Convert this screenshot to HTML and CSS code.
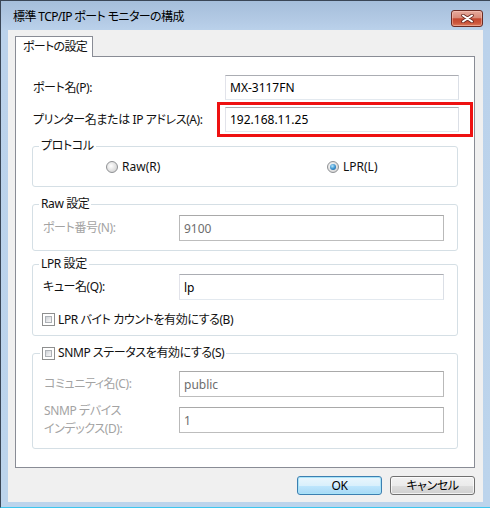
FILE: index.html
```html
<!DOCTYPE html>
<html lang="ja">
<head>
<meta charset="utf-8">
<title>標準 TCP/IP ポート モニターの構成</title>
<link rel="stylesheet" href="styles.css">
</head>
<body>
<div class="window">
  <div class="titlebar">
    <span class="title">標準 TCP/IP ポート モニターの構成</span>
    <div class="close">
      <svg width="13" height="9" viewBox="0 0 13 9">
        <path d="M2 1.5 L11 7.5 M11 1.5 L2 7.5" stroke="#6b2a22" stroke-width="3.6" stroke-linecap="round"/>
        <path d="M2 1.5 L11 7.5 M11 1.5 L2 7.5" stroke="#ffffff" stroke-width="2" stroke-linecap="round"/>
      </svg>
    </div>
  </div>
  <div class="client">
    <div class="tabs"><div class="tab">ポートの設定</div></div>
    <div class="panel">
      <div class="row">
        <span class="lbl">ポート名(P):</span>
        <div class="input top">MX-3117FN</div>
      </div>
      <div class="row row2">
        <span class="lbl">プリンター名または IP アドレス(A):</span>
        <div class="input top">192.168.11.25</div>
        <span class="highlight"></span>
      </div>

      <fieldset class="group proto">
        <legend>プロトコル</legend>
        <div class="radios">
          <span class="opt"><span class="radio"></span>Raw(R)</span>
          <span class="opt"><span class="radio on"></span>LPR(L)</span>
        </div>
      </fieldset>

      <fieldset class="group raw">
        <legend>Raw 設定</legend>
        <div class="frow">
          <span class="lbl dis">ポート番号(N):</span>
          <div class="input dis">9100</div>
        </div>
      </fieldset>

      <fieldset class="group lpr">
        <legend>LPR 設定</legend>
        <div class="frow">
          <span class="lbl">キュー名(Q):</span>
          <div class="input">lp</div>
        </div>
        <div class="checkrow"><span class="cb"></span>LPR バイト カウントを有効にする(B)</div>
      </fieldset>

      <fieldset class="group snmp">
        <legend class="cblegend"><span class="cb"></span>SNMP ステータスを有効にする(S)</legend>
        <div class="frow">
          <span class="lbl dis ind">コミュニティ名(C):</span>
          <div class="input dis">public</div>
        </div>
        <div class="frow second">
          <span class="lbl dis ind two">SNMP デバイス<br>インデックス(D):</span>
          <div class="input dis">1</div>
        </div>
      </fieldset>
    </div>
    <div class="buttons">
      <button class="btn default">OK</button>
      <button class="btn">キャンセル</button>
    </div>
  </div>
</div>
</body>
</html>
```

FILE: styles.css
```css
html, body {
  margin: 0;
  padding: 0;
  background: #ffffff;
}

body {
  font-family: "Noto Sans", "Noto Sans CJK JP", sans-serif;
  font-size: 12px;
  font-feature-settings: "palt";
  color: #111;
}

.window {
  width: 490px;
  height: 508px;
  box-sizing: border-box;
  border-top: 1px solid #3a4656;
  border-left: 1px solid #3a4656;
  border-bottom: 1px solid #3fc6ee;
  background: linear-gradient(#a5bedb 0px, #b2c9e4 18px, #bbd2eb 30px, #bcd4ec 100%);
  display: flex;
  flex-direction: column;
  overflow: hidden;
}

.titlebar {
  height: 29px;
  flex: none;
  display: flex;
  align-items: flex-start;
  justify-content: space-between;
  padding: 0 7px 0 12px;
}

.title {
  margin-top: 8px;
  line-height: 16px;
  font-size: 12px;
  letter-spacing: -0.6px;
  color: #000;
  white-space: nowrap;
}

.close {
  margin-top: 9px;
  width: 32px;
  height: 17px;
  box-sizing: border-box;
  border: 1px solid #6a2b24;
  border-radius: 3px;
  background: linear-gradient(#e7aa9d 0%, #d98b79 45%, #c4472f 52%, #cc563c 80%, #dc7d5f 100%);
  box-shadow: inset 0 0 0 1px rgba(255, 210, 200, 0.45);
  display: flex;
  align-items: center;
  justify-content: center;
}

.close svg {
  display: block;
}

.client {
  flex: none;
  height: 472px;
  margin: 0 7px 0 7px;
  background: #f0f0f0;
  box-sizing: border-box;
  padding: 6px 8px 0 7px;
  display: flex;
  flex-direction: column;
}

.tabs {
  display: flex;
  height: 20px;
  flex: none;
}

.tab {
  position: relative;
  z-index: 1;
  width: 78px;
  height: 21px;
  box-sizing: border-box;
  border: 1px solid #898c95;
  border-bottom: none;
  background: #fff;
  padding: 0 0 0 7px;
  line-height: 19px;
  letter-spacing: -0.7px;
  white-space: nowrap;
}

.panel {
  height: 412px;
  box-sizing: border-box;
  border: 1px solid #898c95;
  background: #fff;
  padding: 18px 16px 0 16px;
  display: flex;
  flex-direction: column;
}

.row {
  display: grid;
  grid-template-columns: 193px 1fr;
  align-items: center;
  height: 25px;
  margin-right: -1px;
}

.row2 {
  position: relative;
  margin-top: 7px;
}

.lbl {
  padding-left: 1px;
  white-space: nowrap;
  line-height: 16px;
  letter-spacing: -0.4px;
}

.lbl.dis {
  color: #a3a3a3;
}

.lbl.ind {
  padding-left: 2px;
}

.lbl.two {
  line-height: 18px;
  margin: -5px 0;
}

.input {
  box-sizing: border-box;
  height: 26px;
  border: 1px solid;
  border-color: #abadb3 #dbdfe6 #e3e9ef #e2e3ea;
  background: #fff;
  padding: 0 4px;
  display: flex;
  align-items: center;
  color: #000;
  white-space: nowrap;
}

.input.top {
  height: 25px;
}

.input.dis {
  border-color: #a9a9a9 #b9b9b9 #bdbdbd #b9b9b9;
  color: #6d6d6d;
}

.highlight {
  position: absolute;
  left: 185px;
  top: -5px;
  width: 256px;
  height: 35px;
  box-sizing: border-box;
  border: 3px solid #ee1111;
}

.group {
  margin: 0;
  padding: 0 13px 0 9px;
  border: 1px solid #d5dfe5;
  border-radius: 3px;
  min-width: 0;
}

.group legend {
  line-height: 14px;
  height: 14px;
  padding: 0 2px;
  margin-left: -3px;
  white-space: nowrap;
  letter-spacing: -0.4px;
}

.proto {
  margin-top: 7px;
  padding-top: 6px;
  padding-bottom: 11px;
}

.radios {
  display: grid;
  grid-template-columns: 221px auto;
  padding-left: 64px;
  height: 16px;
  align-items: center;
}

.opt {
  display: flex;
  align-items: center;
  gap: 4px;
  line-height: 16px;
}

.radio {
  width: 12px;
  height: 12px;
  box-sizing: border-box;
  border-radius: 50%;
  border: 1px solid #8f9194;
  background: radial-gradient(circle at 40% 40%, #ffffff 0%, #e6e6e6 45%, #c9c9c9 100%);
  position: relative;
  flex: none;
}

.radio.on::after {
  content: "";
  position: absolute;
  left: 2px;
  top: 2px;
  width: 6px;
  height: 6px;
  border-radius: 50%;
  background: radial-gradient(circle at 40% 35%, #b9e6fb 0%, #3d95d0 50%, #1a4e8a 100%);
}

.raw {
  margin-top: 10px;
  padding-top: 4px;
  padding-bottom: 9px;
}

.frow {
  display: grid;
  grid-template-columns: 137px 1fr;
  align-items: center;
  height: 26px;
}

.lpr {
  margin-top: 6px;
  padding-top: 3px;
  padding-bottom: 9px;
}

.checkrow {
  margin-top: 13px;
  height: 13px;
  display: flex;
  align-items: center;
  gap: 3px;
  line-height: 16px;
  letter-spacing: -0.4px;
  white-space: nowrap;
}

.cb {
  width: 13px;
  height: 13px;
  box-sizing: border-box;
  border: 1px solid #8e8f8f;
  background: #fff;
  padding: 2px;
  flex: none;
}

.cb::before {
  content: "";
  display: block;
  width: 100%;
  height: 100%;
  box-sizing: border-box;
  border: 1px solid #aeb2b7;
  background: linear-gradient(135deg, #cdd1d6 0%, #e9eaec 60%, #f7f7f7 100%);
}

.snmp {
  margin-top: 10px;
  padding-top: 11px;
  padding-bottom: 15px;
}

.group legend.cblegend {
  display: flex;
  align-items: center;
  gap: 3px;
  margin-left: -2px;
  padding: 0 2px;
}

.frow.second {
  margin-top: 10px;
}

.buttons {
  margin-top: 8px;
  display: flex;
  justify-content: flex-end;
  gap: 8px;
}

.btn {
  width: 85px;
  height: 19px;
  box-sizing: border-box;
  border: 1px solid #707070;
  border-radius: 3px;
  background: linear-gradient(#f2f2f2 0%, #ebebeb 50%, #dddddd 52%, #cfcfcf 100%);
  box-shadow: inset 0 0 0 1px rgba(255, 255, 255, 0.7);
  font-family: "Noto Sans", "Noto Sans CJK JP", sans-serif;
  font-size: 12px;
  font-feature-settings: "palt";
  letter-spacing: -0.4px;
  color: #000;
  padding: 0;
  line-height: 16px;
}

.btn.default {
  border-color: #3c7fb1;
  background: linear-gradient(#eaf6fd 0%, #d9f0fc 50%, #bee6fd 52%, #a7d9f5 100%);
  box-shadow: inset 0 0 0 1px #a8e3f8;
}
```
